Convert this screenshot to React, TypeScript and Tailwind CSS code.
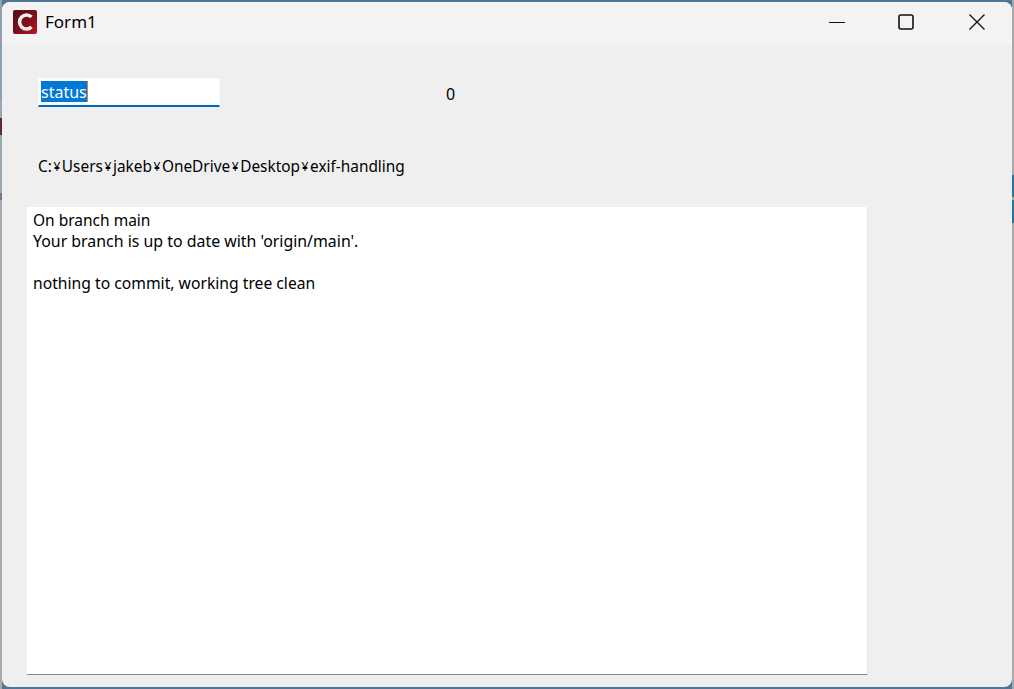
const pathParts = ["C:", "Users", "jakeb", "OneDrive", "Desktop", "exif-handling"];

function AppIcon() {
  return (
    <svg width="24" height="24" viewBox="0 0 24 24" className="shrink-0">
      <defs>
        <linearGradient id="logoBg" x1="0" y1="0" x2="1" y2="1">
          <stop offset="0" stopColor="#4f0d18" />
          <stop offset="0.55" stopColor="#7d0f1c" />
          <stop offset="1" stopColor="#c01322" />
        </linearGradient>
      </defs>
      <rect width="24" height="24" rx="2" fill="url(#logoBg)" />
      <path d="M18.5 7A7 7 0 1 0 18.5 17" fill="none" stroke="#f6eeee" strokeWidth="3.6" />
    </svg>
  );
}

function WindowButtons() {
  return (
    <div className="ml-auto flex items-center">
      <button className="flex w-[71px] justify-center pl-[4px]">
        <svg width="16" height="16" viewBox="0 0 16 16">
          <path d="M0 8.5H16" stroke="#111" strokeWidth="1" />
        </svg>
      </button>
      <button className="flex w-[71px] justify-center">
        <svg width="16" height="16" viewBox="0 0 16 16">
          <rect x="1" y="1" width="14" height="14" rx="2" fill="none" stroke="#111" strokeWidth="1.6" />
        </svg>
      </button>
      <button className="flex w-[71px] justify-center">
        <svg width="18" height="18" viewBox="0 0 18 18">
          <path d="M1.5 1.5L16.5 16.5M16.5 1.5L1.5 16.5" stroke="#111" strokeWidth="1.3" />
        </svg>
      </button>
    </div>
  );
}

export default function App() {
  return (
    <div className="flex h-[689px] w-[1014px] overflow-hidden bg-[#9b9b9b]">
      {/* desktop peeking out on the left */}
      <div className="flex w-[2px] shrink-0 flex-col">
        <div className="h-[100px] bg-[#8fa0b0]" />
        <div className="h-[18px] bg-[#9aa7b3]" />
        <div className="h-[17px] bg-[#5a2a3a]" />
        <div className="h-[58px] bg-[#9aa7b3]" />
        <div className="h-[7px] bg-[#8a6a98]" />
        <div className="flex-1 bg-[#a9a9a9]" />
      </div>
      <div className="flex w-[1010px] shrink-0 flex-col bg-[#4f7599]">
        <div className="h-[2px] shrink-0" />
        <div className="flex h-[685px] shrink-0 flex-col overflow-hidden rounded-[8px] bg-[#efefef] font-['Noto_Sans','Liberation_Sans',sans-serif] text-black">
          <div className="flex h-[43px] shrink-0 items-center bg-[#f3f3f3] pb-[3px] pl-[11px]">
            <AppIcon />
            <span className="ml-2 text-[17px]">Form1</span>
            <WindowButtons />
          </div>
          <div className="flex flex-col pl-[25px] pt-[33px]">
            <div className="flex items-center pl-[11px]">
              <div className="h-[29px] w-[182px] border-x border-t border-b-2 border-x-[#f7f7f7] border-t-[#f7f7f7] border-b-[#0067c0] bg-white pl-[2px] pt-[2px]">
                <span className="block h-[21px] w-[47px] border-r border-[#e08030] bg-[#0078d7] text-[16px] leading-[23px] text-white">status</span>
              </div>
              <span className="ml-[226px] mt-[3px] text-[16px]">0</span>
            </div>
            <div className="mt-[49px] flex pl-[11px] text-[15.4px] leading-[22px]">
              {pathParts.map((part, i) => (
                <span key={i} className="flex items-center">
                  {i > 0 && <span className="w-[10px] text-center text-[12px]">¥</span>}
                  {part}
                </span>
              ))}
            </div>
            <div className="mt-[29px] h-[468px] w-[841px] border-b border-r border-b-[#8a8a8a] border-r-[#e6e6e6] bg-white pl-[6px] pt-[3px] text-[15.7px] leading-[21px]">
              <div className="text-[15.5px]">On branch main</div>
              <div className="text-[15.9px]">Your branch is up to date with 'origin/main'.</div>
              <div className="h-[21px]" />
              <div>nothing to commit, working tree clean</div>
            </div>
          </div>
        </div>
      </div>
      {/* desktop peeking out on the right */}
      <div className="flex w-[2px] shrink-0 flex-col">
        <div className="h-[175px] bg-[#a9a9a9]" />
        <div className="h-[22px] bg-[#2c7299]" />
        <div className="h-[3px] bg-[#a9a9a9]" />
        <div className="h-[23px] bg-[#2c7299]" />
        <div className="flex-1 bg-[#a9a9a9]" />
      </div>
    </div>
  );
}
